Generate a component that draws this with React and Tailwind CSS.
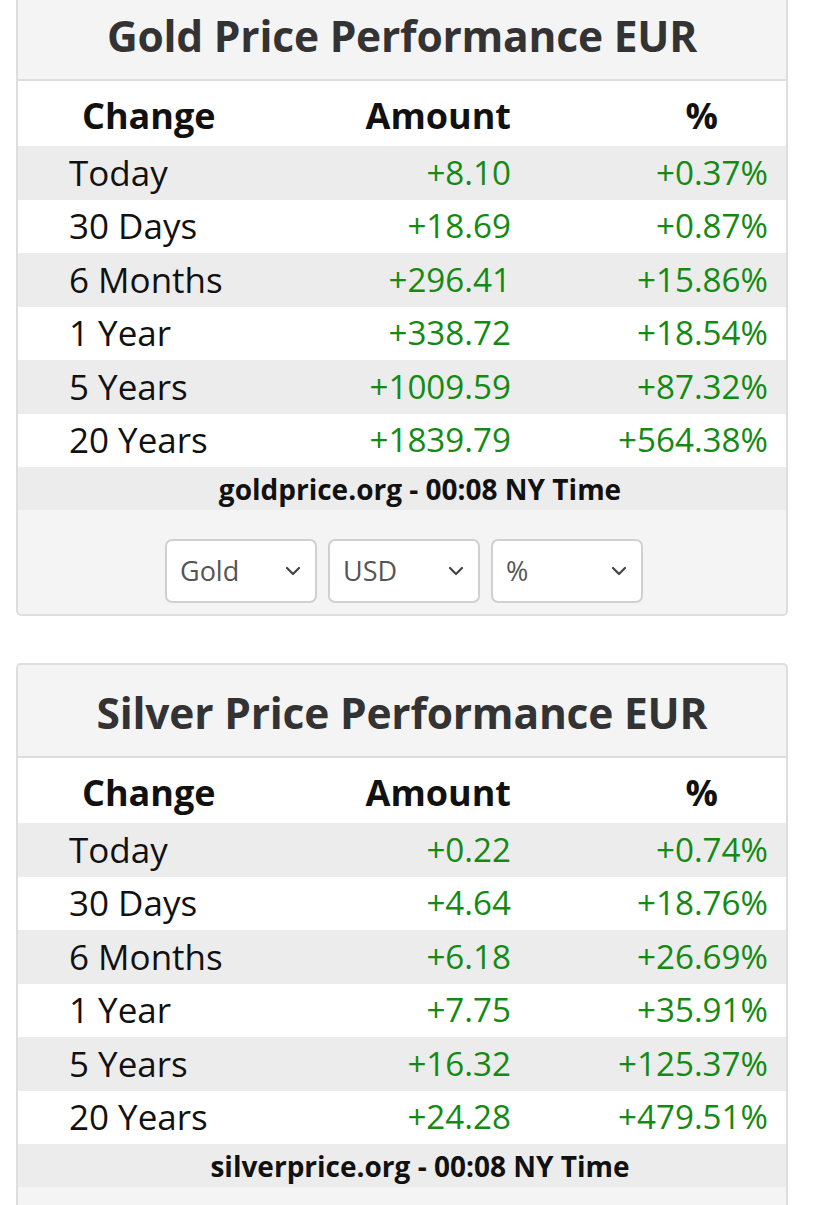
import React from "react";

const gold = [
  ["Today", "+8.10", "+0.37%"],
  ["30 Days", "+18.69", "+0.87%"],
  ["6 Months", "+296.41", "+15.86%"],
  ["1 Year", "+338.72", "+18.54%"],
  ["5 Years", "+1009.59", "+87.32%"],
  ["20 Years", "+1839.79", "+564.38%"],
];

const silver = [
  ["Today", "+0.22", "+0.74%"],
  ["30 Days", "+4.64", "+18.76%"],
  ["6 Months", "+6.18", "+26.69%"],
  ["1 Year", "+7.75", "+35.91%"],
  ["5 Years", "+16.32", "+125.37%"],
  ["20 Years", "+24.28", "+479.51%"],
];

function Chevron() {
  return (
    <svg width="16" height="10" viewBox="0 0 16 10" className="text-[#444]">
      <path d="M2 2 L8 8 L14 2" fill="none" stroke="currentColor" strokeWidth="2.2" strokeLinecap="round" strokeLinejoin="round" />
    </svg>
  );
}

function FakeSelect({ label }) {
  return (
    <div className="w-[152px] h-[64px] bg-white border-2 border-[#d0d0d0] rounded-[7px] flex items-center justify-between pl-[13px] pr-[14px]">
      <span className="text-[27px] text-[#555]">{label}</span>
      <Chevron />
    </div>
  );
}

function PerfCard({ title, rows, source, showSelects }) {
  return (
    <div className="w-[772px] ml-[16px] border-2 border-[#dedede] rounded-[5px] bg-[#f4f4f4] overflow-hidden">
      {/* Title */}
      <div className="h-[93px] flex items-center justify-center border-b-2 border-[#dddddd] pt-[4px]">
        <h2 className="text-[42.5px] font-bold text-[#333] tracking-[-0.2px]">{title}</h2>
      </div>

      {/* Table */}
      <div className="bg-white">
        <div className="grid grid-cols-[300px_193px_257px] pr-[18px] h-[65px] items-center text-[36px] font-bold text-[#111] pt-[4px]">
          <div className="pl-[64px]">Change</div>
          <div className="text-right">Amount</div>
          <div className="text-right pr-[50px]">%</div>
        </div>
        {rows.map(([label, amt, pct], i) => (
          <div
            key={label}
            className={
              "grid grid-cols-[300px_193px_257px] pr-[18px] h-[53.5px] items-center " +
              (i % 2 === 0 ? "bg-[#ececec]" : "bg-white")
            }
          >
            <div className="pl-[51px] text-[35px] text-[#111]">{label}</div>
            <div className="text-right text-[33.2px] text-[#138a13]">{amt}</div>
            <div className="text-right text-[33.2px] text-[#138a13]">{pct}</div>
          </div>
        ))}
        <div className="h-[43px] bg-[#ececec] flex items-center justify-center pl-[36px] text-[28px] font-bold text-[#111]">
          {source}
        </div>
      </div>

      {showSelects ? (
        <div className="flex justify-center gap-[11px] pt-[29px] pb-[11px] pl-[4px]">
          <FakeSelect label="Gold" />
          <FakeSelect label="USD" />
          <FakeSelect label="%" />
        </div>
      ) : (
        <div className="h-[40px]" />
      )}
    </div>
  );
}

export default function App() {
  return (
    <div className="bg-white min-h-screen overflow-hidden font-['Open_Sans',sans-serif]">
      <div className="-mt-[14px] flex flex-col gap-[47px]">
        <PerfCard title="Gold Price Performance EUR" rows={gold} source="goldprice.org - 00:08 NY Time" showSelects />
        <PerfCard title="Silver Price Performance EUR" rows={silver} source="silverprice.org - 00:08 NY Time" />
      </div>
    </div>
  );
}
